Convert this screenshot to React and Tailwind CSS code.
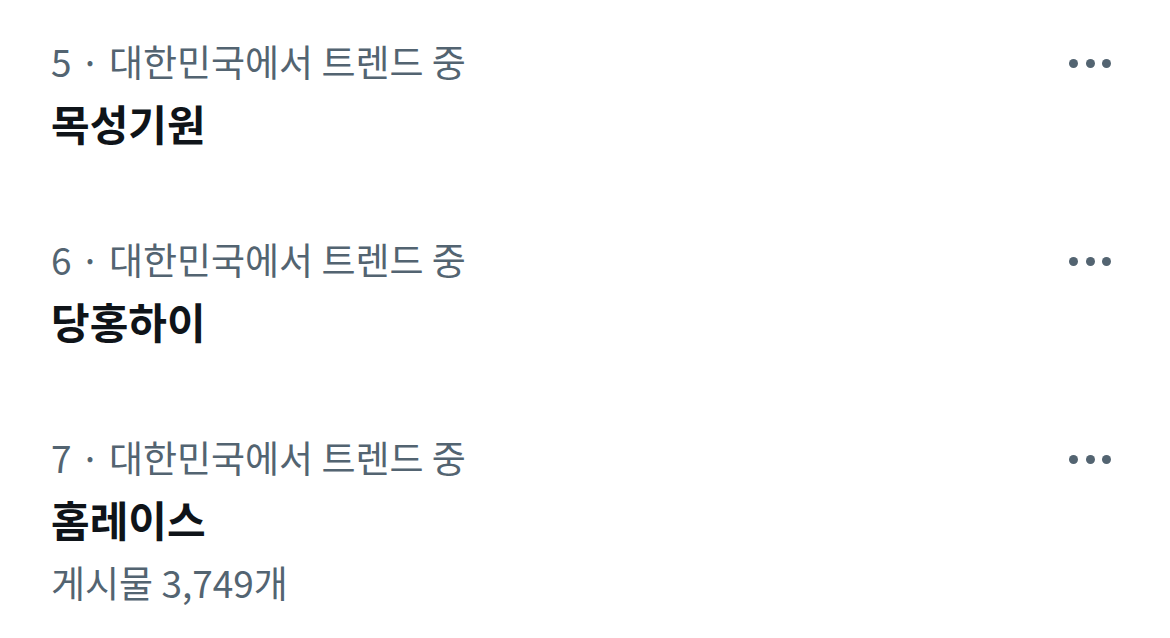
export default function App() {
  const rows = [
    { rank: 5, name: "목성기원" },
    { rank: 6, name: "당홍하이" },
    { rank: 7, name: "홈레이스", posts: "게시물 3,749개" },
  ];
  const font = { fontFamily: '"Noto Sans CJK KR", "Noto Sans", sans-serif' };
  return (
    <div className="w-[1170px] h-[638px] bg-white overflow-hidden" style={font}>
      {rows.map((r) => (
        <div key={r.rank} className="flex justify-between pl-[51px] pr-[59px] pt-[35px] pb-[49px]">
          <div className="flex flex-col">
            <div className="text-[37px] leading-[52px] text-[#536471]">
              {r.rank} · 대한민국에서 트렌드 중
            </div>
            <div className="mt-[10px] text-[42px] leading-[52px] font-bold text-[#0f1419]">
              {r.name}
            </div>
            {r.posts && (
              <div className="mt-[11px] text-[37px] leading-[52px] text-[#536471]">{r.posts}</div>
            )}
          </div>
          <div className="flex h-[52px] items-center gap-[7.5px] mt-[2px]">
            <span className="w-[9px] h-[9px] rounded-full bg-[#536471]" />
            <span className="w-[9px] h-[9px] rounded-full bg-[#536471]" />
            <span className="w-[9px] h-[9px] rounded-full bg-[#536471]" />
          </div>
        </div>
      ))}
    </div>
  );
}
